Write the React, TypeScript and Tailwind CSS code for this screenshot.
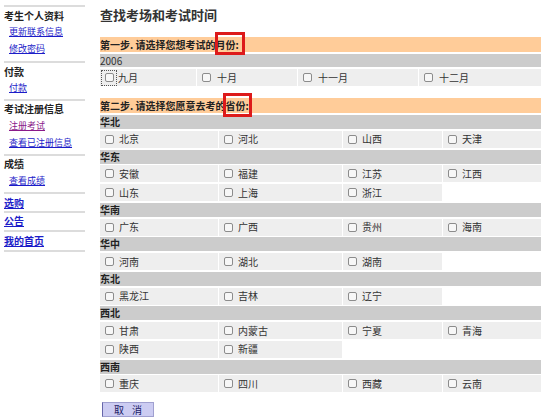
import React from "react";

const FONT = { fontFamily: '"Noto Sans CJK SC", "Noto Sans", sans-serif' };

type Region = { name: string; rows: (string | null)[][] };

const regions: Region[] = [
  { name: "华北", rows: [["北京", "河北", "山西", "天津"]] },
  {
    name: "华东",
    rows: [
      ["安徽", "福建", "江苏", "江西"],
      ["山东", "上海", "浙江", null],
    ],
  },
  { name: "华南", rows: [["广东", "广西", "贵州", "海南"]] },
  { name: "华中", rows: [["河南", "湖北", "湖南", null]] },
  { name: "东北", rows: [["黑龙江", "吉林", "辽宁", null]] },
  {
    name: "西北",
    rows: [
      ["甘肃", "内蒙古", "宁夏", "青海"],
      ["陕西", "新疆", null, null],
    ],
  },
  { name: "西南", rows: [["重庆", "四川", "西藏", "云南"]] },
];

function Box() {
  return (
    <span className="inline-block w-[9px] h-[9px] border border-[#8c8c8c] rounded-[2px] bg-[#f7f7f7] shrink-0" />
  );
}

function Line({ className = "" }: { className?: string }) {
  return <div className={"h-[2px] w-[81px] bg-[#dcdcdc] " + className} />;
}

function Heading({ children, className = "" }: { children: React.ReactNode; className?: string }) {
  return (
    <div className={"h-[14px] flex items-center text-[10px] font-bold text-[#222] leading-none " + className}>
      {children}
    </div>
  );
}

function SubLink({
  children,
  className = "",
  visited = false,
}: {
  children: React.ReactNode;
  className?: string;
  visited?: boolean;
}) {
  return (
    <div className={"h-[14px] flex items-center pl-[5px] leading-none " + className}>
      <a
        href="#"
        className={
          "text-[9px] underline " + (visited ? "text-[#8a1a8a]" : "text-[#1c1cc8]")
        }
      >
        {children}
      </a>
    </div>
  );
}

function BoldLink({ children, className = "" }: { children: React.ReactNode; className?: string }) {
  return (
    <div className={"h-[14px] flex items-center leading-none " + className}>
      <a href="#" className="text-[10px] font-bold underline text-[#1c1cc8]">
        {children}
      </a>
    </div>
  );
}

export default function App() {
  return (
    <div className="w-[545px] h-[419px] bg-white flex overflow-hidden" style={FONT}>
      {/* Sidebar */}
      <div className="w-[86px] pl-[4px] flex flex-col shrink-0">
        <Line className="mt-[5px]" />
        <Heading className="mt-[2px]">考生个人资料</Heading>
        <SubLink className="mt-[1px]">更新联系信息</SubLink>
        <SubLink className="mt-[3px]">修改密码</SubLink>
        <Line className="mt-[6px]" />
        <Heading className="mt-[2px]">付款</Heading>
        <SubLink className="mt-[1px]">付款</SubLink>
        <Line className="mt-[5px]" />
        <Heading className="mt-[1px]">考试注册信息</Heading>
        <SubLink className="mt-[2px]" visited>
          注册考试
        </SubLink>
        <SubLink className="mt-[3px]">查看已注册信息</SubLink>
        <Line className="mt-[5px]" />
        <Heading className="mt-[1px]">成绩</Heading>
        <SubLink className="mt-[2px]">查看成绩</SubLink>
        <Line className="mt-[5px]" />
        <BoldLink className="mt-[2px]">选购</BoldLink>
        <Line className="mt-[1px]" />
        <BoldLink className="mt-[1px]">公告</BoldLink>
        <Line className="mt-[2px]" />
        <BoldLink className="mt-[2px]">我的首页</BoldLink>
        <Line className="mt-[2px]" />
      </div>

      {/* Main */}
      <div className="relative ml-[14px] w-[441px] flex flex-col">
        <div className="h-[20px] mt-[4px] flex items-center text-[13px] font-bold text-[#333] leading-none">
          查找考场和考试时间
        </div>

        <div className="mt-[13px] h-[15px] bg-[#ffcc99] flex items-center text-[10px] font-bold text-[#222] leading-none">
          第一步. 请选择您想考试的月份:
        </div>
        <div className="mt-[2px] h-[13px] bg-[#cccccc] flex items-center text-[10px] text-[#333] leading-none">
          2006
        </div>
        <div className="mt-[2px] grid grid-cols-[96px_100px_120px_122px] gap-x-px">
          {["九月", "十月", "十一月", "十二月"].map((m, i) => (
            <div
              key={m}
              className="h-[17px] bg-[#eeeeee] flex items-center text-[10px] text-[#333] leading-none"
            >
              {i === 0 ? (
                <span className="ml-[1px] w-[16px] h-[16px] border border-dotted border-[#555] flex items-center justify-center">
                  <Box />
                </span>
              ) : (
                <span className="ml-[5px] flex">
                  <Box />
                </span>
              )}
              <span className={i === 0 ? "ml-[1px]" : "ml-[6px]"}>{m}</span>
            </div>
          ))}
        </div>

        <div className="mt-[12px] h-[15px] bg-[#ffcc99] flex items-center text-[10px] font-bold text-[#222] leading-none">
          第二步. 请选择您愿意去考的省份:
        </div>

        <div className="mt-[2px] flex flex-col gap-y-[1.75px]">
          {regions.map((r) => (
            <React.Fragment key={r.name}>
              <div className="h-[14px] bg-[#cccccc] flex items-center text-[10px] font-bold text-[#222] leading-none">
                {r.name}
              </div>
              {r.rows.map((row, ri) => (
                <div key={ri} className="grid grid-cols-[118px_123px_99px_98px] gap-x-px">
                  {row.map((p, pi) =>
                    p ? (
                      <div
                        key={pi}
                        className="h-[17px] bg-[#eeeeee] flex items-center pl-[5px] gap-[5px] text-[10px] text-[#333] leading-none"
                      >
                        <Box />
                        <span>{p}</span>
                      </div>
                    ) : (
                      <div key={pi} className="h-[17px]" />
                    )
                  )}
                </div>
              ))}
            </React.Fragment>
          ))}
        </div>

        <div className="mt-[10px] ml-[2px]">
          <button className="w-[52px] h-[15px] bg-[#ccccf2] border border-[#a0a0d0] border-l-[#6666aa] flex items-center justify-center text-[10px] text-[#1a1a66] leading-none tracking-[8px] pl-[8px]">
            取消
          </button>
        </div>

        {/* annotation boxes */}
        <div className="absolute left-[115px] top-[32px] w-[30px] h-[23px] border-[3px] border-[#dd1a1a]" />
        <div className="absolute left-[123px] top-[93px] w-[29px] h-[24px] border-[3px] border-[#dd1a1a]" />
      </div>
    </div>
  );
}
